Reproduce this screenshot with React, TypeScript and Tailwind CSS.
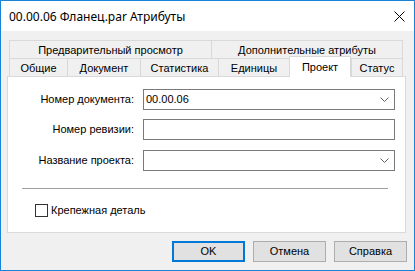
import React from 'react'

const tabsTop = ['Предварительный просмотр', 'Дополнительные атрибуты']
const tabsTopW = ['w-[202px]', 'w-[192px]']

const tabsBottom = [
  { label: 'Общие', w: 'w-[58px]' },
  { label: 'Документ', w: 'w-[73px]' },
  { label: 'Статистика', w: 'w-[78px]' },
  { label: 'Единицы', w: 'w-[71px]' },
  { label: 'Проект', w: 'w-[62px]', active: true },
  { label: 'Статус', w: 'w-[52px]' },
]

function Chevron() {
  return (
    <svg width="9" height="5" viewBox="0 0 9 5" className="shrink-0">
      <polyline points="0.5,0.5 4.5,4.5 8.5,0.5" fill="none" stroke="#606060" strokeWidth="1" />
    </svg>
  )
}

function Field({ value, combo }: { value?: string; combo?: boolean }) {
  return (
    <div className="w-[252px] h-[21px] border border-[#7a7a7a] bg-white flex items-center pl-[2px] pr-[5px]">
      <span className="flex-1 text-black">{value}</span>
      {combo && <Chevron />}
    </div>
  )
}

function Row({ label, children, mt }: { label: string; children: React.ReactNode; mt: string }) {
  return (
    <div className={`flex items-center ${mt}`}>
      <span className="w-[127px] text-right pr-[1px]">{label}</span>
      <div className="ml-[8px]">{children}</div>
    </div>
  )
}

export default function App() {
  return (
    <div
      className="w-[415px] h-[271px] border border-[#1883d7] bg-[#f0f0f0] flex flex-col text-[11px] text-black leading-[13px]"
      style={{ fontFamily: '"Liberation Sans", Arial, sans-serif' }}
    >
      {/* Title bar */}
      <div className="h-[30px] bg-white flex items-center justify-between pl-[8px] pr-[9px] shrink-0">
        <span className="text-[12px] font-['Noto_Sans',sans-serif]">00.00.06 Фланец.par Атрибуты</span>
        <svg width="11" height="11" viewBox="0 0 11 11">
          <path d="M0.5 0.5 L10.5 10.5 M10.5 0.5 L0.5 10.5" stroke="#000" strokeWidth="1" />
        </svg>
      </div>

      {/* Body */}
      <div className="px-[6px] pt-[9px] flex flex-col">
        <div className="pl-[2px]">
          <div className="flex h-[18px]">
            {tabsTop.map((t, i) => (
              <div
                key={t}
                className={`${tabsTopW[i]} border-t border-l border-[#d9d9d9] ${i === 1 ? 'border-r' : ''} flex items-center justify-center pt-[1px]`}
              >
                {t}
              </div>
            ))}
          </div>
          <div className="flex h-[18px]">
            {tabsBottom.map((t, i) =>
              t.active ? (
                <div
                  key={t.label}
                  className={`${t.w} h-[21px] -mt-[2px] relative z-10 bg-white border-t border-l border-r border-[#d9d9d9] flex items-center justify-center`}
                >
                  {t.label}
                </div>
              ) : (
                <div
                  key={t.label}
                  className={`${t.w} border-t border-l border-[#d9d9d9] ${i === tabsBottom.length - 1 ? 'border-r' : ''} flex items-center justify-center pt-[1px]`}
                >
                  {t.label}
                </div>
              )
            )}
          </div>
        </div>

        {/* Panel */}
        <div className="w-[399px] h-[157px] border border-[#d9d9d9] bg-white flex flex-col">
          <Row label="Номер документа:" mt="mt-[12px]">
            <Field value="00.00.06" combo />
          </Row>
          <Row label="Номер ревизии:" mt="mt-[9px]">
            <Field />
          </Row>
          <Row label="Название проекта:" mt="mt-[10px]">
            <Field combo />
          </Row>
          <div className="ml-[14px] mt-[17px] w-[366px] h-px bg-[#a0a0a0]" />
          <label className="flex items-center ml-[27px] mt-[15px]">
            <span className="w-[13px] h-[13px] border border-[#333333] bg-white" />
            <span className="ml-[3px]">Крепежная деталь</span>
          </label>
        </div>

        {/* Buttons */}
        <div className="flex justify-end gap-[8px] mt-[8px] pr-[1px]">
          <button className="w-[73px] h-[21px] border-2 border-[#0078d7] bg-[#e1e1e1] flex items-center justify-center">
            OK
          </button>
          <button className="w-[73px] h-[21px] border border-[#adadad] bg-[#e1e1e1] flex items-center justify-center">
            Отмена
          </button>
          <button className="w-[73px] h-[21px] border border-[#adadad] bg-[#e1e1e1] flex items-center justify-center">
            Справка
          </button>
        </div>
      </div>
    </div>
  )
}
